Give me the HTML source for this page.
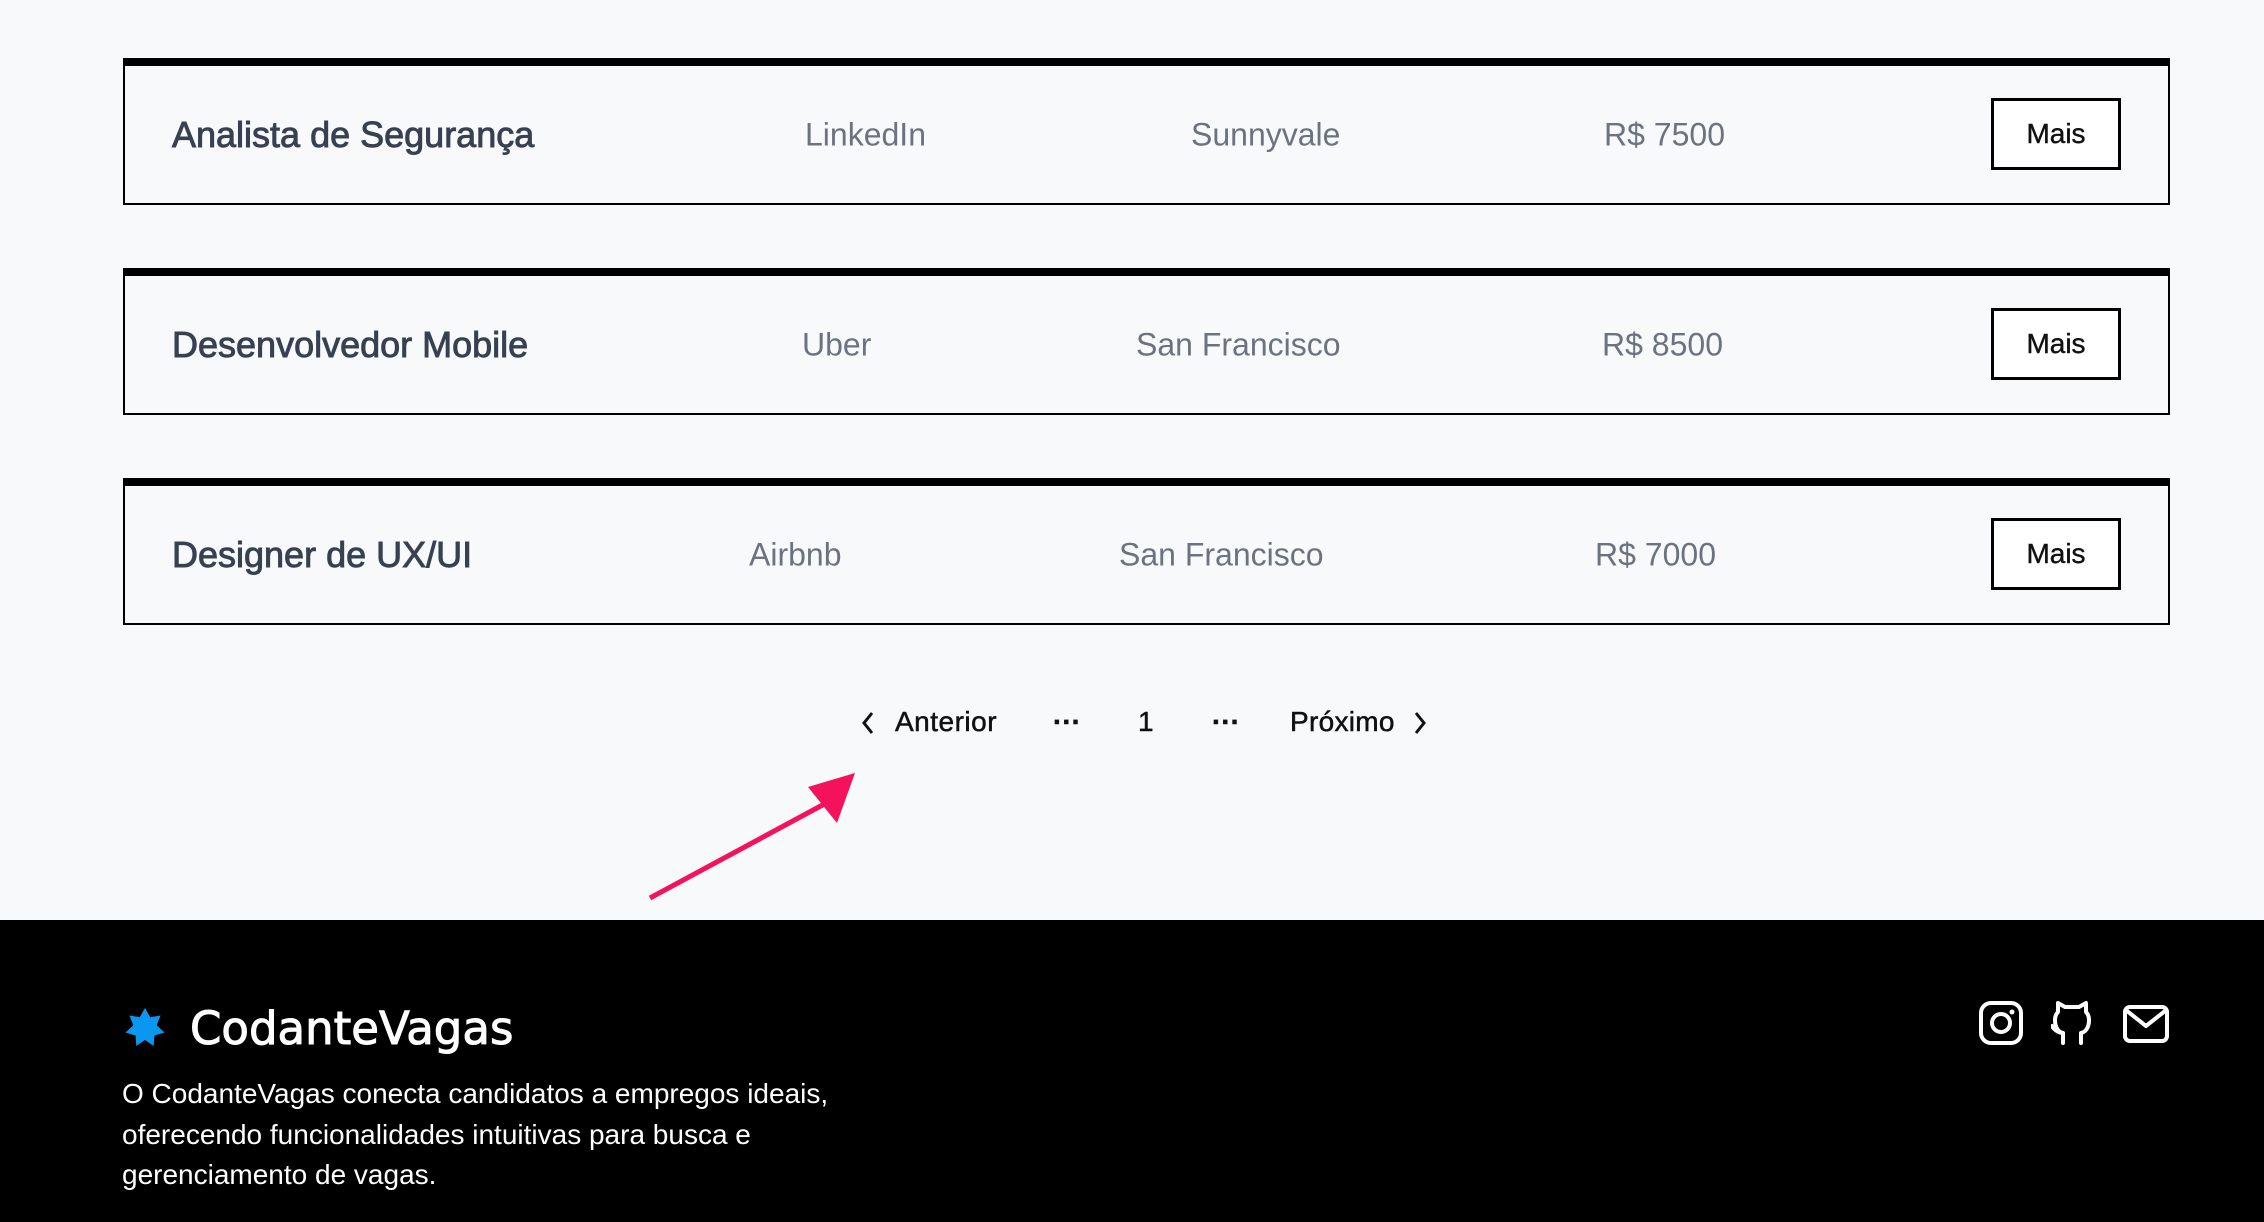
<!DOCTYPE html>
<html><head><meta charset="utf-8"><style>
*{box-sizing:border-box;margin:0;padding:0}
body{width:2264px;height:1222px;background:#f8f9fb;font-family:"Liberation Sans",sans-serif;position:relative;overflow:hidden}
.card{position:absolute;left:123px;width:2047px;height:147px;border:2px solid #000;border-top:8px solid #000;background:#f8f9fb}
.t{position:absolute;top:50%;transform:translateY(-50%);white-space:nowrap}
.title{left:47px;font-size:36px;color:#374151;-webkit-text-stroke:0.9px #374151}
.g{font-size:32px;color:#6b7280}
.btn{position:absolute;left:1866px;top:32px;width:130px;height:72px;border:3px solid #000;background:#fff;font-size:28px;color:#111;display:flex;align-items:center;justify-content:center;-webkit-text-stroke:0.4px #111}
.p{position:absolute;top:706px;font-size:28px;color:#111;white-space:nowrap;-webkit-text-stroke:0.5px #111}
footer{position:absolute;left:0;top:920px;width:2264px;height:302px;background:#000;color:#fff}
</style></head><body>
<div class="card" style="top:58px">
<div class="t title">Analista de Segurança</div>
<div class="t g" style="left:680px">LinkedIn</div>
<div class="t g" style="left:1066px">Sunnyvale</div>
<div class="t g" style="left:1479px">R$ 7500</div>
<div class="btn">Mais</div></div>
<div class="card" style="top:268px">
<div class="t title">Desenvolvedor Mobile</div>
<div class="t g" style="left:677px">Uber</div>
<div class="t g" style="left:1011px">San Francisco</div>
<div class="t g" style="left:1477px">R$ 8500</div>
<div class="btn">Mais</div></div>
<div class="card" style="top:478px">
<div class="t title">Designer de UX/UI</div>
<div class="t g" style="left:624px">Airbnb</div>
<div class="t g" style="left:994px">San Francisco</div>
<div class="t g" style="left:1470px">R$ 7000</div>
<div class="btn">Mais</div></div>

<svg style="position:absolute;left:860px;top:710px" width="16" height="26" viewBox="0 0 16 26"><path d="M12 3L4 13l8 10" fill="none" stroke="#111" stroke-width="3"/></svg>
<div class="p" style="left:895px;letter-spacing:0.5px">Anterior</div>
<div class="p" style="left:1053px;font-weight:bold">···</div>
<div class="p" style="left:1138px">1</div>
<div class="p" style="left:1212px;font-weight:bold">···</div>
<div class="p" style="left:1290px;letter-spacing:0.3px">Próximo</div>
<svg style="position:absolute;left:1412px;top:710px" width="16" height="26" viewBox="0 0 16 26"><path d="M4 3l8 10-8 10" fill="none" stroke="#111" stroke-width="3"/></svg>

<svg style="position:absolute;left:640px;top:765px" width="230" height="140"><path d="M10 133L190 36" stroke="#f5125c" stroke-width="5"/><polygon points="215,8 168,22 197,58" fill="#f5125c"/></svg>

<footer>
<svg style="position:absolute;left:124px;top:87px" width="42" height="42" viewBox="-21 -21 42 42"><polygon fill="#0a97f0" points="0,-20 5.2,-10.8 15.6,-12.5 11.7,-2.7 19.5,4.5 9.4,7.5 8.7,18 0,12 -8.7,18 -9.4,7.5 -19.5,4.5 -11.7,-2.7 -15.6,-12.5 -5.2,-10.8"/></svg>
<div style="position:absolute;left:190px;top:82px;font-size:45px;font-family:'DejaVu Sans',sans-serif;-webkit-text-stroke:1px #fff">CodanteVagas</div>
<div style="position:absolute;left:122px;top:154px;font-size:28px;line-height:40.5px;width:900px">O CodanteVagas conecta candidatos a empregos ideais,<br>oferecendo funcionalidades intuitivas para busca e<br>gerenciamento de vagas.</div>
<svg style="position:absolute;left:1978px;top:80px" width="46" height="46" viewBox="0 0 46 46"><rect x="3" y="3" width="40" height="40" rx="10" fill="none" stroke="#fff" stroke-width="4"/><circle cx="23" cy="23" r="9" fill="none" stroke="#fff" stroke-width="4"/><circle cx="34" cy="12" r="2.5" fill="#fff"/></svg>
<svg style="position:absolute;left:2051px;top:80px" width="42" height="46" viewBox="0 0 42 46"><path d="M12 43V33c-6 0-10-5-11-7M12 33c-5-1-8-6-8-13 0-3 1-6 3-8V3l7 4h14l7-4v9c2 2 3 5 3 8 0 7-3 12-8 13v10" fill="none" stroke="#fff" stroke-width="4" stroke-linecap="round" stroke-linejoin="round"/></svg>
<svg style="position:absolute;left:2122px;top:84px" width="48" height="40" viewBox="0 0 48 40"><rect x="3" y="3" width="42" height="34" rx="5" fill="none" stroke="#fff" stroke-width="4"/><path d="M5 7l19 15 19-15" fill="none" stroke="#fff" stroke-width="4" stroke-linejoin="round"/></svg>
</footer>
</body></html>
